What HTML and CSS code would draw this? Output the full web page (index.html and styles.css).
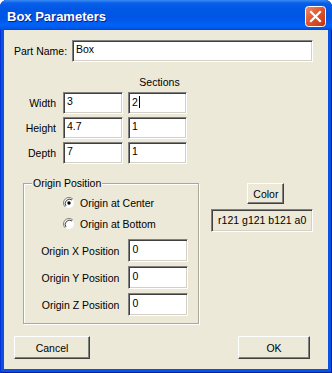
FILE: index.html
```html
<!DOCTYPE html>
<html lang="en">

<head>
    <meta charset="UTF-8">
    <meta name="viewport" content="width=device-width, initial-scale=1.0">
    <title>Box Parameters</title>
    <link rel="stylesheet" href="styles.css">
</head>

<body>
    <div class="ventana">
        <div class="barra">
            <span class="titulo">Box Parameters</span>
            <button class="cerrar" title="Close">
                <svg width="21" height="21" viewBox="0 0 21 21">
                    <defs>
                        <linearGradient id="rojo" x1="0" y1="0" x2="1" y2="1">
                            <stop offset="0" stop-color="#f08c6c" />
                            <stop offset="0.45" stop-color="#e2572f" />
                            <stop offset="1" stop-color="#c1320f" />
                        </linearGradient>
                    </defs>
                    <rect x="0.5" y="0.5" width="20" height="20" rx="3" fill="url(#rojo)" stroke="#fff" />
                    <path d="M6 6 L15 15 M15 6 L6 15" stroke="#fff" stroke-width="2.2" stroke-linecap="square" />
                </svg>
            </button>
        </div>

        <div class="cliente">
            <div class="fila-nombre">
                <label for="nombre">Part Name:</label>
                <input type="text" id="nombre" class="campo campo-nombre" value="Box" spellcheck="false">
            </div>

            <div class="medidas">
                <div class="cabecera">Sections</div>
                <label for="ancho">Width</label>
                <input type="text" id="ancho" class="campo" value="3">
                <div class="campo campo-cursor">2<span class="cursor"></span></div>
                <label for="alto">Height</label>
                <input type="text" id="alto" class="campo" value="4.7">
                <input type="text" class="campo" value="1">
                <label for="fondo">Depth</label>
                <input type="text" id="fondo" class="campo" value="7">
                <input type="text" class="campo" value="1">
            </div>

            <div class="zona-baja">
                <fieldset class="grupo">
                    <legend>Origin Position</legend>
                    <div class="radio">
                        <svg width="12" height="12" viewBox="0 0 12 12">
                            <circle cx="6" cy="6" r="5" fill="#fff" />
                            <path d="M9.9 2.1 A5.5 5.5 0 0 0 2.1 9.9" fill="none" stroke="#808080" />
                            <path d="M9 3 A4.3 4.3 0 0 0 3 9" fill="none" stroke="#404040" />
                            <circle cx="6" cy="6" r="1.7" fill="#000" />
                        </svg>
                        <span>Origin at Center</span>
                    </div>
                    <div class="radio">
                        <svg width="12" height="12" viewBox="0 0 12 12">
                            <circle cx="6" cy="6" r="5" fill="#fff" />
                            <path d="M9.9 2.1 A5.5 5.5 0 0 0 2.1 9.9" fill="none" stroke="#808080" />
                            <path d="M9 3 A4.3 4.3 0 0 0 3 9" fill="none" stroke="#404040" />
                        </svg>
                        <span>Origin at Bottom</span>
                    </div>
                    <div class="origenes">
                        <label for="ox">Origin X Position</label>
                        <input type="text" id="ox" class="campo" value="0">
                        <label for="oy">Origin Y Position</label>
                        <input type="text" id="oy" class="campo" value="0">
                        <label for="oz">Origin Z Position</label>
                        <input type="text" id="oz" class="campo" value="0">
                    </div>
                </fieldset>

                <div class="color">
                    <button class="boton boton-color">Color</button>
                    <div class="muestra">r121 g121 b121 a0</div>
                </div>
            </div>

            <div class="acciones">
                <button class="boton boton-cancelar">Cancel</button>
                <button class="boton boton-ok">OK</button>
            </div>
        </div>
    </div>
</body>

</html>
```

FILE: styles.css
```css
body {
    margin: 0;
    font-family: "Liberation Sans", Arial, sans-serif;
    font-size: 10.5px;
    color: #000;
}

.ventana {
    width: 332px;
    height: 373px;
    display: flex;
    flex-direction: column;
    background: #0a52e0;
    border-radius: 7px 7px 0 0;
    box-shadow: inset 1px 0 #0831d9, inset -1px 0 #001ea0, inset 0 -1px #001ea0;
    overflow: hidden;
}

.barra {
    height: 30px;
    flex: none;
    display: flex;
    align-items: center;
    justify-content: space-between;
    padding: 0 6px 0 7px;
    background: linear-gradient(to bottom, #3b8cf5 0, #0a5fe8 3px, #0058e6 8px, #0055e5 18px, #0062f8 25px, #0058ec 28px, #0046d4 30px);
}

.titulo {
    color: #fff;
    font-weight: bold;
    font-size: 13px;
    text-shadow: 1px 1px #0a1e8a;
    margin-top: 2px;
}

.cerrar {
    width: 21px;
    height: 21px;
    padding: 0;
    border: 0;
    background: none;
    margin-top: 2px;
}

.cerrar svg {
    display: block;
}

.cliente {
    flex: 1;
    margin: 0 4px 4px;
    background: #ece9d8;
    padding: 10px 15px 0 10px;
    display: flex;
    flex-direction: column;
}

.campo {
    box-sizing: border-box;
    height: 22px;
    margin: 0;
    padding: 0 3px 4px;
    background: #fff;
    font-family: inherit;
    font-size: 10.5px;
    color: #000;
    border: 1px solid;
    border-color: #808080 #fff #fff #808080;
    box-shadow: inset 1px 1px #404040, inset -1px -1px #d4d0c8;
    outline: none;
}

.fila-nombre {
    display: flex;
    align-items: center;
}

.fila-nombre label {
    width: 58px;
}

.campo-nombre {
    flex: 1;
}

.medidas {
    margin-top: 13px;
    display: grid;
    grid-template-columns: 42px 60px 59px;
    grid-auto-rows: 22px;
    grid-template-rows: 14px;
    column-gap: 7px;
    row-gap: 3px;
    align-items: center;
}

.medidas label {
    text-align: right;
}

.cabecera {
    grid-column: 3;
    text-align: center;
    line-height: 14px;
}

.medidas .campo {
    width: 100%;
    height: 22px;
}

.medidas label + .campo + .campo,
.medidas label + .campo + .campo-cursor {
    margin-left: -2px;
    width: 59px;
}

.campo-cursor {
    display: flex;
    align-items: center;
    padding-bottom: 3px;
}

.cursor {
    display: inline-block;
    width: 1px;
    height: 12px;
    background: #000;
    margin-left: 1px;
}

.zona-baja {
    margin-top: 12px;
    display: flex;
    align-items: flex-start;
}

.grupo {
    box-sizing: border-box;
    width: 177px;
    margin: 0 0 0 9px;
    padding: 0 10px 7px 8px;
    border: 1px solid #aca899;
    box-shadow: inset 1px 1px #fff, 1px 1px #fff;
    min-width: 0;
}

.grupo legend {
    padding: 0 1px;
    margin-left: 0;
    line-height: 14px;
    background: #ece9d8;
}

.radio {
    display: flex;
    align-items: center;
    gap: 5px;
    height: 14px;
    margin-left: 31px;
    margin-top: 6px;
}

.radio + .radio {
    margin-top: 7px;
}

.radio svg {
    display: block;
    flex: none;
}

.origenes {
    margin-top: 8px;
    display: grid;
    grid-template-columns: 1fr 60px;
    grid-auto-rows: 23px;
    column-gap: 9px;
    row-gap: 4px;
    align-items: center;
}

.origenes label {
    text-align: right;
}

.origenes .campo {
    width: 100%;
    height: 23px;
}

.color {
    margin-left: 12px;
    width: 102px;
    display: flex;
    flex-direction: column;
}

.boton {
    box-sizing: border-box;
    margin: 0;
    padding: 0;
    font-family: inherit;
    font-size: 10.5px;
    color: #000;
    background: #ece9d8;
    border: 1px solid;
    border-color: #fff #404040 #404040 #fff;
    box-shadow: inset -1px -1px #808080;
}

.boton-color {
    width: 37px;
    height: 21px;
    margin: 7px 0 0 36px;
}

.muestra {
    box-sizing: border-box;
    height: 23px;
    margin-top: 5px;
    line-height: 20px;
    text-align: center;
    border: 1px solid;
    border-color: #808080 #fff #fff #808080;
    box-shadow: inset 1px 1px #404040, inset -1px -1px #d4d0c8;
}

.acciones {
    margin-top: 12px;
    display: flex;
    justify-content: space-between;
    padding-right: 3px;
}

.boton-cancelar {
    width: 76px;
    height: 23px;
}

.boton-ok {
    width: 72px;
    height: 23px;
}
```
